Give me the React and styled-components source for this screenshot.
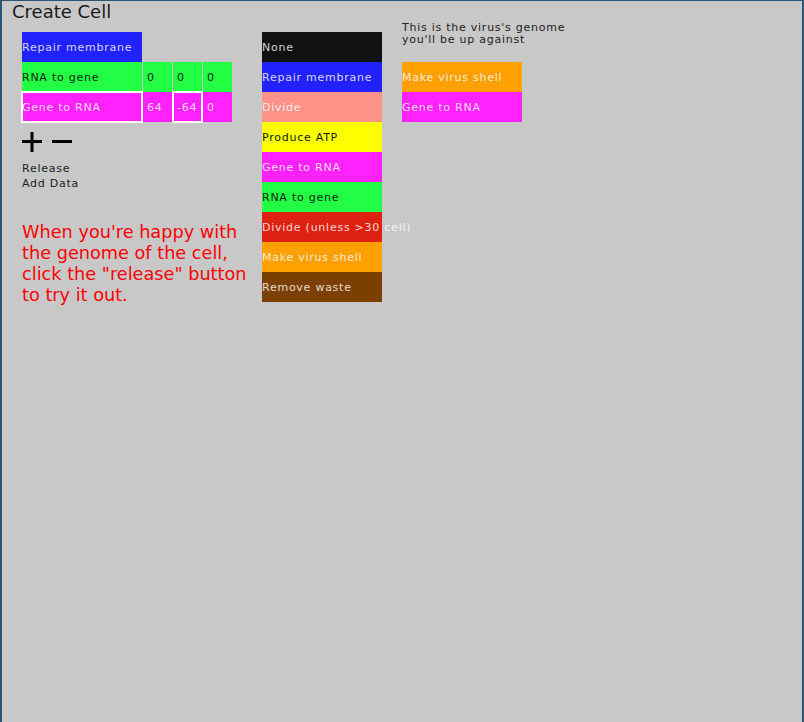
import React from 'react';
import styled, { createGlobalStyle } from 'styled-components';

const GlobalStyle = createGlobalStyle`
	html, body {
		margin: 0;
		padding: 0;
		background: #c8c8c8;
	}
	body {
		font-family: 'DejaVu Sans', 'Liberation Sans', sans-serif;
	}
`;

const GENES = {
	'None': { bg: '#111111', dark: false },
	'Repair membrane': { bg: '#2222ff', dark: false },
	'Divide': { bg: '#ff938a', dark: false },
	'Produce ATP': { bg: '#ffff00', dark: true },
	'Gene to RNA': { bg: '#ff22ff', dark: false },
	'RNA to gene': { bg: '#22ff44', dark: true },
	'Divide (unless >30 cell)': { bg: '#dd2211', dark: false },
	'Make virus shell': { bg: '#ffa000', dark: false },
	'Remove waste': { bg: '#7b3f00', dark: false }
};

const Frame = styled.div`
	box-sizing: border-box;
	width: 804px;
	height: 722px;
	border-top: 1px solid #2b5576;
	border-left: 2px solid #2b5576;
	border-right: 2px solid #2b5576;
	background: #c8c8c8;
	overflow: hidden;
`;

const Title = styled.h1`
	margin: 0;
	padding-left: 10px;
	font-size: 18px;
	line-height: 21px;
	font-weight: normal;
	color: #1a1a1a;
`;

const Columns = styled.div`
	display: grid;
	grid-template-columns: 240px 140px auto;
	padding-left: 20px;
	align-items: start;
`;

const Column = styled.div`
	display: flex;
	flex-direction: column;
	margin-top: ${p => p.$top || 0}px;
`;

const GeneRow = styled.div`
	display: flex;
	height: 30px;
`;

const Cell = styled.div`
	box-sizing: border-box;
	flex: none;
	width: ${p => (p.$wide ? 120 : 29)}px;
	height: 30px;
	margin-left: ${p => (p.$wide ? 0 : 1)}px;
	padding: 2px 0 0 ${p => (p.$wide ? 0 : 4)}px;
	background: ${p => p.$bg};
	color: ${p => (p.$dark ? '#0b1f0b' : 'rgba(255, 255, 255, 0.82)')};
	font-size: 11px;
	letter-spacing: 0.75px;
	line-height: 28px;
	white-space: nowrap;
	box-shadow: ${p => (p.$selected ? '0 0 0 1px #ffffff, inset 0 0 0 1px #ffffff' : 'none')};
	position: relative;
	z-index: ${p => (p.$selected ? 1 : 0)};
`;

const Buttons = styled.div`
	display: flex;
	gap: 10px;
	margin-top: 10px;
	height: 20px;
`;

const IconButton = styled.svg`
	display: block;
	width: 20px;
	height: 20px;
`;

const SmallText = styled.div`
	font-size: 11px;
	letter-spacing: 0.75px;
	line-height: ${p => p.$lh || 15}px;
	color: #222222;
	white-space: nowrap;
`;

const Actions = styled(SmallText)`
	margin-top: 9px;
`;

const Hint = styled.p`
	margin: 31px 0 0 0;
	font-size: 17.7px;
	line-height: 21px;
	color: #ff0000;
	white-space: nowrap;
`;

const GeneList = styled.div`
	display: flex;
	flex-direction: column;
	width: 120px;
`;

const VirusGenes = styled(GeneList)`
	margin-top: 16px;
`;

const gene = name => GENES[name];

const cellGenome = [
	{ name: 'Repair membrane', values: [] },
	{ name: 'RNA to gene', values: ['0', '0', '0'] },
	{ name: 'Gene to RNA', values: ['64', '-64', '0'], selected: [true, false, true, false] }
];

const palette = [
	'None',
	'Repair membrane',
	'Divide',
	'Produce ATP',
	'Gene to RNA',
	'RNA to gene',
	'Divide (unless >30 cell)',
	'Make virus shell',
	'Remove waste'
];

const virusGenome = ['Make virus shell', 'Gene to RNA'];

const GeneCell = ({ name, selected }) => (
	<Cell $wide $bg={gene(name).bg} $dark={gene(name).dark} $selected={selected}>
		{name}
	</Cell>
);

const App = () => (
	<Frame>
		<GlobalStyle />
		<Title>Create Cell</Title>
		<Columns>
			<Column $top={10}>
				{cellGenome.map(row => (
					<GeneRow key={row.name}>
						<GeneCell name={row.name} selected={row.selected && row.selected[0]} />
						{row.values.map((v, i) => (
							<Cell
								key={i}
								$bg={gene(row.name).bg}
								$dark={gene(row.name).dark}
								$selected={row.selected && row.selected[i + 1]}
							>
								{v}
							</Cell>
						))}
					</GeneRow>
				))}
				<Buttons>
					<IconButton viewBox="0 0 20 20">
						<path d="M0 9.5h20M10 0v20" stroke="#000" strokeWidth="3" />
					</IconButton>
					<IconButton viewBox="0 0 20 20">
						<path d="M0 9.5h20" stroke="#000" strokeWidth="3" />
					</IconButton>
				</Buttons>
				<Actions>
					Release
					<br />
					Add Data
				</Actions>
				<Hint>
					When you're happy with
					<br />
					the genome of the cell,
					<br />
					click the "release" button
					<br />
					to try it out.
				</Hint>
			</Column>
			<Column $top={10}>
				<GeneList>
					{palette.map(name => (
						<GeneCell key={name} name={name} />
					))}
				</GeneList>
			</Column>
			<Column>
				<SmallText $lh={12}>
					This is the virus's genome
					<br />
					you'll be up against
				</SmallText>
				<VirusGenes>
					{virusGenome.map(name => (
						<GeneCell key={name} name={name} />
					))}
				</VirusGenes>
			</Column>
		</Columns>
	</Frame>
);

export default App;
